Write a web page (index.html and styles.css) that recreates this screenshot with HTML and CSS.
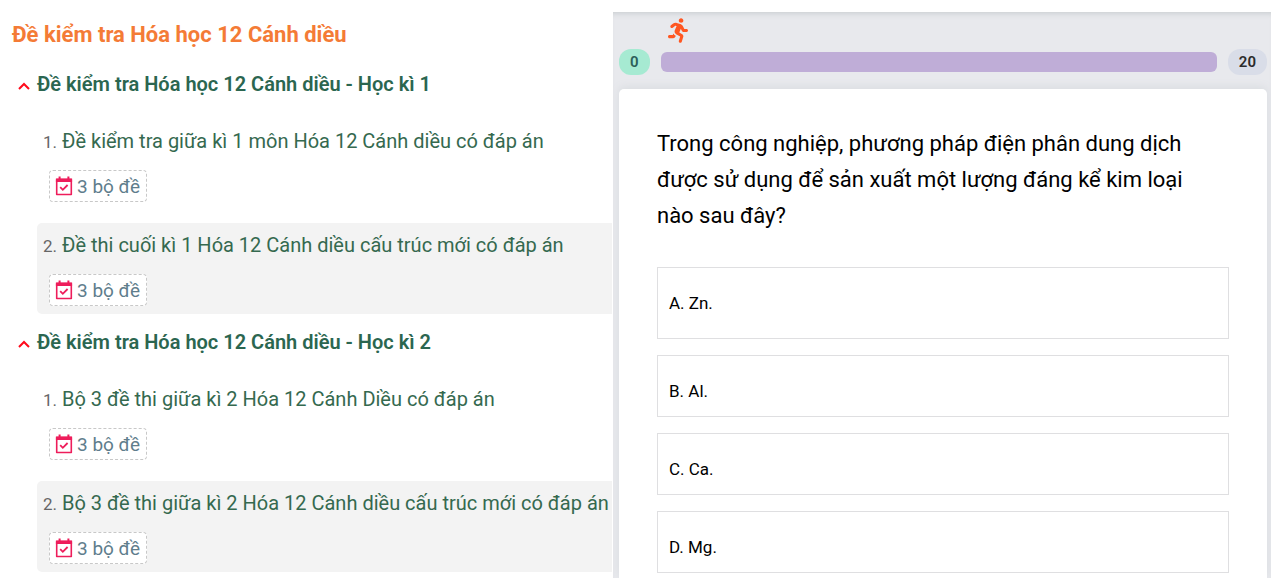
FILE: index.html
```html
<!DOCTYPE html>
<html lang="vi">
<head>
    <meta charset="UTF-8">
    <meta name="viewport" content="width=device-width, initial-scale=1.0">
    <title>Đề kiểm tra Hóa học 12 Cánh diều</title>
    <link rel="stylesheet" href="styles.css">
</head>
<body>
    <svg class="sprite" aria-hidden="true">
        <symbol id="icon-up" viewBox="0 0 12 8">
            <path d="M1 7 L6 2 L11 7" fill="none" stroke="currentColor" stroke-width="2"/>
        </symbol>
        <symbol id="icon-calendar" viewBox="0 0 18 20">
            <path d="M1.7 3.5h14.6v15H1.7z" fill="#fff" stroke="currentColor" stroke-width="1.6" stroke-linejoin="round"/>
            <path d="M.9 2.6h16.2v3.4H.9zM3.6.4h2v3h-2zM12.4.4h2v3h-2z" fill="currentColor"/>
            <path d="M5.2 11.2l2.6 2.6 4.8-4.8" fill="none" stroke="currentColor" stroke-width="1.8"/>
        </symbol>
    </svg>

    <div class="page">
        <main class="exams">
            <h1>Đề kiểm tra Hóa học 12 Cánh diều</h1>

            <details class="term" open>
                <summary><svg class="arrow"><use href="#icon-up"/></svg>Đề kiểm tra Hóa học 12 Cánh diều - Học kì 1</summary>
                <ol class="exam-list">
                    <li>
                        <div class="exam-title"><span class="num">1.</span> <a href="#">Đề kiểm tra giữa kì 1 môn Hóa 12 Cánh diều có đáp án</a></div>
                        <span class="badge"><svg><use href="#icon-calendar"/></svg>3 bộ đề</span>
                    </li>
                    <li>
                        <div class="exam-title"><span class="num">2.</span> <a href="#">Đề thi cuối kì 1 Hóa 12 Cánh diều cấu trúc mới có đáp án</a></div>
                        <span class="badge"><svg><use href="#icon-calendar"/></svg>3 bộ đề</span>
                    </li>
                </ol>
            </details>

            <details class="term" open>
                <summary><svg class="arrow"><use href="#icon-up"/></svg>Đề kiểm tra Hóa học 12 Cánh diều - Học kì 2</summary>
                <ol class="exam-list">
                    <li>
                        <div class="exam-title"><span class="num">1.</span> <a href="#">Bộ 3 đề thi giữa kì 2 Hóa 12 Cánh Diều có đáp án</a></div>
                        <span class="badge"><svg><use href="#icon-calendar"/></svg>3 bộ đề</span>
                    </li>
                    <li>
                        <div class="exam-title"><span class="num">2.</span> <a href="#">Bộ 3 đề thi giữa kì 2 Hóa 12 Cánh diều cấu trúc mới có đáp án</a></div>
                        <span class="badge"><svg><use href="#icon-calendar"/></svg>3 bộ đề</span>
                    </li>
                </ol>
            </details>
        </main>

        <section class="quiz">
            <div class="progress">
                <svg class="runner" viewBox="0 0 416 512"><path fill="currentColor" d="M272 96c26.51 0 48-21.49 48-48S298.51 0 272 0s-48 21.49-48 48 21.49 48 48 48zM113.69 317.47l-14.8 34.52H32c-17.67 0-32 14.33-32 32s14.33 32 32 32h77.45c19.25 0 36.58-11.44 44.11-29.09l8.79-20.52-10.67-6.3c-17.32-10.23-30.06-25.37-37.99-42.61zM384 223.99h-44.03l-26.06-53.25c-12.5-25.55-35.45-44.23-61.78-50.94l-71.08-21.14c-28.3-6.8-57.77-.55-80.84 17.14l-39.67 30.41c-14.03 10.75-16.69 30.83-5.94 44.86s30.84 16.66 44.86 5.91l39.69-30.41c7.67-5.89 17.44-8 25.27-6.14l14.7 4.37-37.46 87.39c-12.62 29.48-1.31 64.01 26.3 80.31l84.98 50.17-27.47 87.73c-5.28 16.86 4.11 34.82 20.97 40.09 3.19 1 6.41 1.48 9.58 1.48 13.61 0 26.23-8.77 30.52-22.45l31.64-101.06c5.91-20.77-2.89-43.08-21.64-54.39l-61.24-36.14 31.31-78.28 20.27 41.43c8 16.34 24.92 26.89 43.11 26.89H384c17.67 0 32-14.33 32-32s-14.33-31.99-32-31.99z"/></svg>
                <div class="progress-row">
                    <span class="count done">0</span>
                    <div class="bar"></div>
                    <span class="count total">20</span>
                </div>
            </div>
            <div class="card">
                <p class="question">Trong công nghiệp, phương pháp điện phân dung dịch được sử dụng để sản xuất một lượng đáng kể kim loại nào sau đây?</p>
                <div class="answers">
                    <button type="button">A. Zn.</button>
                    <button type="button">B. Al.</button>
                    <button type="button">C. Ca.</button>
                    <button type="button">D. Mg.</button>
                </div>
            </div>
        </section>
    </div>
</body>
</html>
```
FILE: styles.css
```css
* {
    box-sizing: border-box;
}

body {
    margin: 0;
    font-family: Roboto, "Liberation Sans", sans-serif;
    background: #fff;
}

.sprite {
    display: none;
}

.page {
    display: grid;
    grid-template-columns: 612fr 658fr;
    gap: 1px;
    padding: 12px 9px 9px 0;
}

/* exam list */
.exams {
    padding: 8px 0 0 12px;
}

h1 {
    margin: 0 0 19px;
    font-size: 22px;
    line-height: 30px;
    font-weight: 700;
    color: #f47b36;
}

.term {
    margin-bottom: 13px;
}

.term:last-child {
    margin-bottom: 0;
}

summary {
    display: flex;
    align-items: center;
    gap: 7px;
    padding-left: 6px;
    font-size: 20px;
    line-height: 30px;
    font-weight: 600;
    color: #2b6650;
    list-style: none;
    cursor: pointer;
}

.arrow {
    width: 12px;
    height: 8px;
    margin-top: 3px;
    color: #ff0a1b;
}

.exam-list {
    display: grid;
    gap: 13px;
    margin: 20px 0 0 25px;
    padding: 0;
    list-style: none;
}

.exam-list li {
    padding: 7px 0 8px 6px;
    border-radius: 5px 0 0 5px;
}

.exam-list li:nth-child(even) {
    background: #f3f3f3;
}

.exam-title {
    font-size: 20px;
    line-height: 30px;
    white-space: nowrap;
}

.exam-title a {
    color: #35694f;
    text-decoration: none;
}

.num {
    font-size: 17px;
    line-height: 20px;
    color: #666;
}

.badge {
    display: flex;
    align-items: center;
    gap: 4px;
    width: max-content;
    height: 32px;
    margin: 14px 0 0 6px;
    padding: 0 6px 0 5px;
    border: 1px dashed #c8c8c8;
    border-radius: 4px;
    background: #fff;
    font-size: 19px;
    color: #5f7d8c;
}

.badge svg {
    width: 18px;
    height: 20px;
    color: #ee1d5b;
}

/* quiz */
.quiz {
    display: flex;
    flex-direction: column;
    padding: 0 4px 0 6px;
    overflow: hidden;
    background: #e8e9ed;
    box-shadow: inset 0 6px 6px -5px #c4c9cc;
}

.progress {
    padding: 6px 0 14px;
}

.runner {
    display: block;
    width: 20px;
    height: 25px;
    margin: 0 0 6px 49px;
    color: #ff5722;
}

.progress-row {
    display: flex;
    align-items: center;
    gap: 11px;
}

.count {
    padding: 0 11px;
    border-radius: 12px;
    font-size: 15px;
    line-height: 26px;
    font-weight: 600;
}

.done {
    background: #a6ead2;
    color: #2d6059;
}

.total {
    background: #d9dde8;
    color: #2b2b2b;
}

.bar {
    flex: 1;
    height: 20px;
    border-radius: 6px;
    background: #bfadd7;
}

.card {
    flex: 1;
    padding: 37px 38px 5px;
    border-radius: 5px 5px 0 0;
    background: #fff;
    box-shadow: 0 -2px 8px #d9dce0;
}

.question {
    margin: 0 0 33px;
    padding-right: 12px;
    font-size: 22px;
    line-height: 36px;
    color: #000;
}

.answers {
    display: flex;
    flex-direction: column;
    gap: 16px;
}

.answers button {
    padding: 23px 11px 13px;
    border: 1px solid #dfdfe1;
    background: #fff;
    font-family: inherit;
    font-size: 17px;
    line-height: 24px;
    text-align: left;
    color: #000;
}

.answers button:first-child {
    padding-bottom: 23px;
}
```
